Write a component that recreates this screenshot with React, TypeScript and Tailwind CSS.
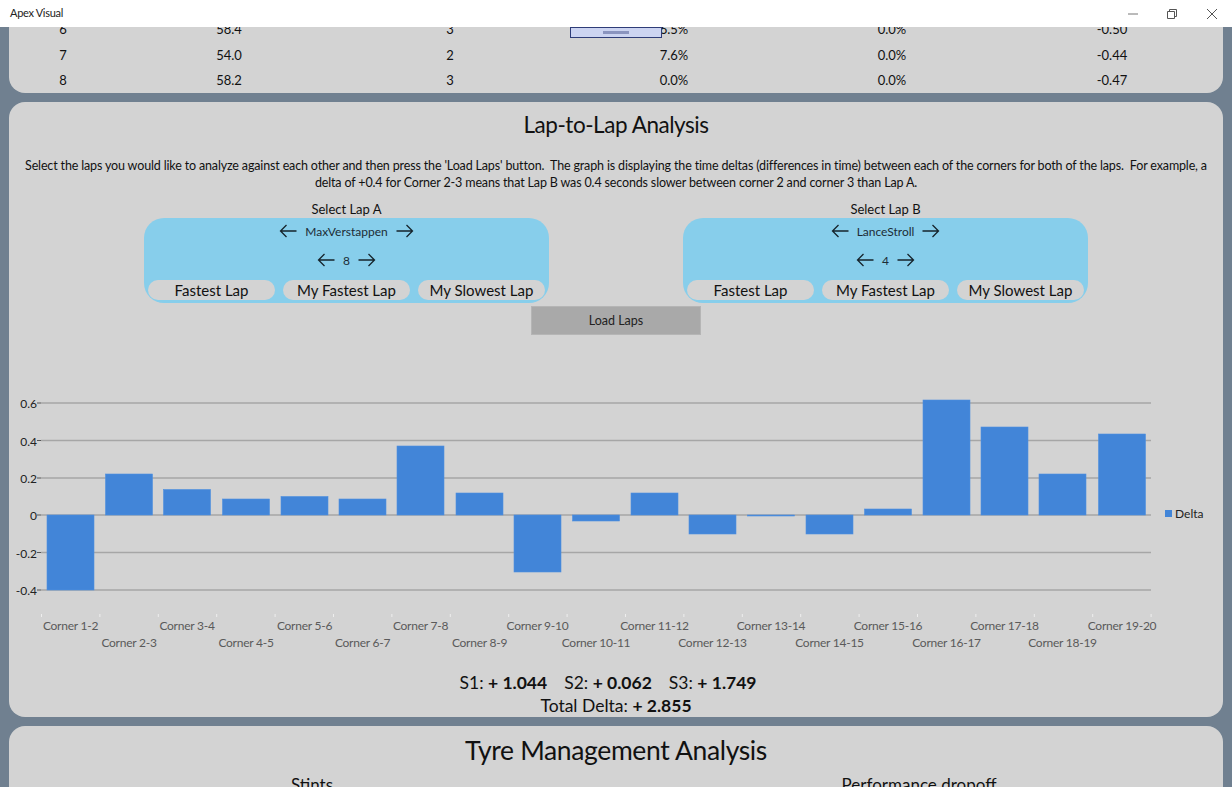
import { ReactNode } from "react";

const rows = [
  ["6", "58.4", "3", "6.5%", "0.0%", "-0.50"],
  ["7", "54.0", "2", "7.6%", "0.0%", "-0.44"],
  ["8", "58.2", "3", "0.0%", "0.0%", "-0.47"],
];

// x / top / bottom pixel of each bar, zero line is y=515 in page coords
const bars = [
  [47, 515, 590], [105.5, 474, 515], [163.5, 489.5, 515], [222.5, 499, 515], [281, 496.5, 515],
  [339, 499, 515], [397, 446, 515], [456, 493, 515], [514, 515, 572], [572.5, 515, 521],
  [631, 493, 515], [689, 515, 534], [747.5, 515, 516], [806, 515, 534], [864.5, 509, 515],
  [923, 400, 515], [981, 427, 515], [1039, 474, 515], [1098.5, 434, 515],
];

const yTicks: [string, number][] = [
  ["0.6", 403], ["0.4", 440.5], ["0.2", 478], ["0", 515], ["-0.2", 552.5], ["-0.4", 590],
];

function Arrow({ left }: { left?: boolean }) {
  return (
    <svg width="18" height="14" viewBox="0 0 18 14" fill="none" stroke="#16242c" strokeWidth="1.3">
      {left ? <path d="M17.5 7H1.5M7.5 1 1.5 7l6 6" /> : <path d="M.5 7h16M10.5 1l6 6-6 6" />}
    </svg>
  );
}

function Picker({ children }: { children: ReactNode }) {
  return (
    <div className="flex h-[16px] items-center justify-center gap-[8px]">
      <Arrow left />
      <span className="pt-[2px] text-[12px] text-[#1c2c36]">{children}</span>
      <Arrow />
    </div>
  );
}

function LapSelect({ title, driver, lap }: { title: string; driver: string; lap: string }) {
  return (
    <div className="w-[405px]">
      <p className="h-[17px] text-center text-[13px] leading-[16px] text-[#111]">{title}</p>
      <div className="flex h-[85px] flex-col rounded-[20px] bg-[#87ceeb] px-1 pb-[3px] pt-[5px]">
        <Picker>{driver}</Picker>
        <div className="mt-[12.5px]">
          <Picker>{lap}</Picker>
        </div>
        <div className="mt-auto grid grid-cols-3 gap-2">
          {["Fastest Lap", "My Fastest Lap", "My Slowest Lap"].map((t) => (
            <div key={t} className="flex h-[20px] items-center justify-center rounded-[10px] bg-[#d3d3d3] text-[15px] text-[#111]">
              {t}
            </div>
          ))}
        </div>
      </div>
    </div>
  );
}

function DeltaChart() {
  return (
    <svg width="1214" height="270" viewBox="9 390 1214 270" className="block" fontFamily="Lato, sans-serif">
      {yTicks.map(([t, y]) => (
        <g key={t}>
          <line x1="37" x2="41" y1={y} y2={y} stroke="#555555" strokeWidth="1" />
          <line x1="41" x2="1151" y1={y} y2={y} stroke="#a6a6a6" strokeWidth="1.4" />
          <text x="37" y={y + 5} textAnchor="end" fontSize="12" fill="#222">{t}</text>
        </g>
      ))}
      {bars.map(([x, top, bottom]) => (
        <rect key={x} x={x} y={top} width="47" height={bottom - top} fill="#4285d8" stroke="#4f8fe0" strokeWidth="0.6" />
      ))}
      {Array.from({ length: 20 }, (_, i) => {
        const x = 41.5 + i * 58.4;
        return <line key={i} x1={x} x2={x} y1="614" y2="617" stroke="#eeeeee" />;
      })}
      {bars.map(([x], i) => (
        <text
          key={i}
          x={x + 23.5}
          y={i % 2 === 0 ? 630 : 647}
          textAnchor="middle"
          fontSize="12"
          letterSpacing="-0.25"
          fill="#5a5a5a"
        >
          Corner {i + 1}-{i + 2}
        </text>
      ))}
      <rect x="1165" y="510" width="7" height="7" fill="#4285d8" />
      <text x="1175" y="518" fontSize="12" fill="#222">Delta</text>
    </svg>
  );
}

export default function App() {
  return (
    <div className="flex h-[787px] w-[1232px] flex-col overflow-hidden bg-[#708090] text-[#111] [font-family:Lato,sans-serif]">
      <header className="z-10 flex h-[27px] shrink-0 items-center justify-between bg-white pl-[10px]">
        <span className="text-[11px] tracking-[-0.3px] text-[#222]">Apex Visual</span>
        <div className="flex items-center">
          <svg width="40" height="27" viewBox="0 0 40 27" stroke="#777" fill="none"><path d="M16 14h10" /></svg>
          <svg width="40" height="27" viewBox="0 0 40 27" stroke="#555" fill="none"><path d="M15.500 11.500h7v7h-7zM17.500 11.500v-2h7v7h-2" /></svg>
          <svg width="40" height="27" viewBox="0 0 40 27" stroke="#555" fill="none"><path d="M15 9l10 10M25 9 15 19" /></svg>
        </div>
      </header>

      <div className="relative px-[9px]">
        <section className="h-[66px] overflow-hidden rounded-b-[16px] bg-[#d3d3d3]">
          <div className="-mt-[10px]">
            {rows.map((r) => (
              <div key={r[0]} className="grid h-[25.5px] grid-cols-[108px_224px_218px_230px_206px_234px] items-center text-center text-[13px]">
                {r.map((c, i) => (
                  <span key={i}>{c}</span>
                ))}
              </div>
            ))}
          </div>
        </section>
        <div className="absolute left-[570px] top-0 flex h-[11px] w-[92px] items-center justify-center border border-[#2f3d78] bg-[#ccd4f1]">
          <div className="h-[3px] w-[26px] bg-[#8a94bf]" />
        </div>
      </div>

      <section className="mx-[9px] mt-[9px] h-[615px] shrink-0 rounded-[16px] bg-[#d3d3d3] pt-[8px]">
        <h2 className="text-center text-[22.5px] leading-[30px] tracking-[-0.45px] text-[#111]">Lap-to-Lap Analysis</h2>
        <p className="mt-[17px] whitespace-pre text-center text-[12.5px] leading-[17px] tracking-[-0.15px] text-[#111]">
          {"Select the laps you would like to analyze against each other and then press the 'Load Laps' button.  The graph is displaying the time deltas (differences in time) between each of the corners for both of the laps.  For example, a"}
          <br />
          delta of +0.4 for Corner 2-3 means that Lap B was 0.4 seconds slower between corner 2 and corner 3 than Lap A.
        </p>
        <div className="mt-[10px] flex justify-center gap-[134px]">
          <LapSelect title="Select Lap A" driver="MaxVerstappen" lap="8" />
          <LapSelect title="Select Lap B" driver="LanceStroll" lap="4" />
        </div>
        <div className="mt-[3px] flex justify-center">
          <button className="h-[29px] w-[170px] border border-[#b5b5b5] bg-[#a9a9a9] pt-px text-[12.5px] text-[#222]">Load Laps</button>
        </div>
        <div className="mt-[55px]">
          <DeltaChart />
        </div>
        <div className="mt-[11px] flex justify-center gap-[17px] pr-[16px] text-[17.5px] leading-[23px]">
          <span>S1: <b className="font-bold">+ 1.044</b></span>
          <span>S2: <b className="font-bold">+ 0.062</b></span>
          <span>S3: <b className="font-bold">+ 1.749</b></span>
        </div>
        <p className="text-center text-[17.5px] leading-[23px]">Total Delta: <b className="font-bold">+ 2.855</b></p>
      </section>

      <section className="mx-[9px] mt-[9px] flex-1 rounded-t-[16px] bg-[#d3d3d3] pt-[6px]">
        <h2 className="text-center text-[26.5px] leading-[36px] tracking-[-0.35px] text-[#111]">Tyre Management Analysis</h2>
        <div className="mt-[6px] flex text-[17px] leading-[22px]">
          <span className="w-[606px] text-center">Stints</span>
          <span className="w-[608px] text-center">Performance dropoff</span>
        </div>
      </section>
    </div>
  );
}
